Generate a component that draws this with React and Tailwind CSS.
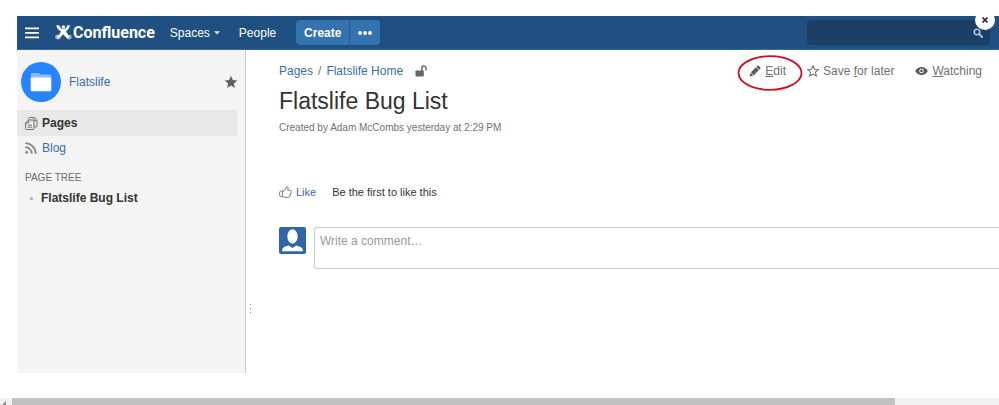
import React from 'react';

const Hamburger = () => (
    <svg width="14" height="12" viewBox="0 0 14 12" fill="#fff" aria-hidden="true">
        <path d="M0 .5h14v1.7H0zM0 5h14v1.7H0zM0 9.6h14v1.7H0z" />
    </svg>
);

const LogoMark = () => (
    <svg width="17" height="17" viewBox="0 0 17 17" fill="none" aria-hidden="true">
        <circle cx="8.4" cy="2.9" r="1.7" fill="#fff" />
        <path d="M1.200 1.200h3c.5 1.900 1.900 3.500 4.200 3.900 2.300-.4 3.500-2 4-3.900h2.600c-.5 2.700-1.900 4.700-4 6.100 1 2.300 2.300 3.900 4.200 5.400l-2.200 2C11 13.500 9.400 12 8.300 10.300 7 12 5.400 13.500 3.500 14.700l-2.200-2c2.200-1.400 3.700-3 4.700-5.200C3.500 6.100 1.800 4 1.200 1.200z" fill="#fff" />
        <path d="M3.500 11.500c-1.600-.5-2.900.5-2.700 1.800.3 1.500 2.700 2 4.200.8M13.300 11.500c1.600-.5 2.900.5 2.700 1.800-.3 1.500-2.700 2-4.200.8" stroke="#b5cbe2" strokeWidth="1.200" />
    </svg>
);

const SearchIcon = () => (
    <svg width="10" height="10" viewBox="0 0 10 10" fill="none" stroke="#a9c3e0" aria-hidden="true">
        <circle cx="4" cy="4" r="2.800" strokeWidth="1.600" />
        <path d="M6.200 6.200L9 9" strokeWidth="1.900" strokeLinecap="round" />
    </svg>
);

const FolderAvatar = () => (
    <svg className="shrink-0" width="40" height="40" viewBox="0 0 40 40" aria-hidden="true">
        <circle cx="20" cy="20" r="20" fill="#2684ff" />
        <path d="M10 12a1 1 0 0 1 1-1h7l1.500 1.500H29a1 1 0 0 1 1 1V18H10z" fill="#8abdff" />
        <path d="M9.700 15.500h20.600V28a1.200 1.200 0 0 1-1.200 1.200H10.900A1.200 1.200 0 0 1 9.700 28z" fill="#fff" />
    </svg>
);

const STAR = 'M7 .8l1.800 4.200 4.500.4-3.400 3 1 4.500L7 10.500l-3.900 2.400 1-4.500-3.400-3L5.200 5z';

const StarFilled = () => (
    <svg width="14" height="14" viewBox="0 0 14 14" fill="#5f5f5f" aria-hidden="true">
        <path d={STAR} />
    </svg>
);

const StarOutline = () => (
    <svg width="12" height="12" viewBox="0 0 14 14" fill="none" stroke="#707070" strokeWidth="1.200" aria-hidden="true">
        <path d={STAR} />
    </svg>
);

const PagesIcon = () => (
    <svg width="13" height="13" viewBox="0 0 13 13" fill="none" stroke="#707070" aria-hidden="true">
        <path d="M3.800 2.500v-1a1 1 0 0 1 1-1h4.400l2.800 2.700V9a1 1 0 0 1-1 1H9.300" />
        <path d="M8.800.8v2.700h2.900" strokeWidth=".8" />
        <path d="M3.600 3L.5 5.800v5.700a1 1 0 0 0 1 1H8a1 1 0 0 0 1-1V4a1 1 0 0 0-1-1zM3.700 3.200v2.700H.8" />
        <path d="M2.500 8.200H7M2.500 10.200H7" strokeWidth=".9" />
    </svg>
);

const RssIcon = () => (
    <svg width="12" height="12" viewBox="0 0 12 12" fill="none" stroke="#8a8a8a" aria-hidden="true">
        <circle cx="1.700" cy="10.300" r="1.500" fill="#8a8a8a" stroke="none" />
        <path d="M.3 5.200a6.500 6.500 0 0 1 6.500 6.500M.3 1.200a10.500 10.500 0 0 1 10.500 10.500" strokeWidth="1.800" />
    </svg>
);

const UnlockIcon = () => (
    <svg width="12" height="12" viewBox="0 0 12 12" fill="none" aria-hidden="true">
        <rect x=".5" y="5.500" width="8.300" height="6" rx=".8" fill="#666" />
        <path d="M6.800 6V3.200a2.100 2.100 0 0 1 4.200 0v2.300" stroke="#666" strokeWidth="1.500" />
    </svg>
);

const PencilIcon = () => (
    <svg width="12" height="12" viewBox="0 0 12 12" fill="#5c5c5c" aria-hidden="true">
        <path d="M.6 11.500l.9-3.700 2.800 2.800zM1.900 7.300L7 2.200l2.900 2.900-5.100 5.100zM7.400 1.800l1-1c.4-.4.9-.4 1.300 0l1.600 1.600c.4.4.4.9 0 1.300l-1 1z" />
    </svg>
);

const EyeIcon = () => (
    <svg width="13" height="10" viewBox="0 0 13 10" aria-hidden="true">
        <path d="M.2 5C1.800 2.300 4 .9 6.500.9S11.200 2.300 12.800 5C11.200 7.700 9 9.100 6.500 9.100S1.800 7.700.2 5z" fill="#555" />
        <circle cx="6.500" cy="4.900" r="2.300" fill="#fff" />
        <circle cx="6.500" cy="4.900" r="1.300" fill="#555" />
    </svg>
);

const ThumbIcon = () => (
    <svg width="13" height="12" viewBox="0 0 13 12" fill="none" stroke="#777" strokeLinejoin="round" aria-hidden="true">
        <path d="M4 5.300L6.300 3.600 7.400.9c.3-.6 1.800-.3 1.700.9L8.700 4.200h2.600c.8 0 1.200.6 1 1.300l-1.400 4.800c-.2.700-.6 1-1.300 1H5.500L4 10.500M4 5H2.200C1 5 .6 6 .6 7.800s.4 3 1.600 3H4c-.8-1-.9-4.700 0-5.800z" />
    </svg>
);

const UserAvatar = () => (
    <svg className="shrink-0" width="27" height="27" viewBox="0 0 27 27" aria-hidden="true">
        <rect width="27" height="27" rx="2" fill="#2f66a3" />
        <ellipse cx="13.500" cy="9.500" rx="5.200" ry="7.200" fill="#fff" />
        <path d="M3 24.300c0-3.300 1.800-4.700 6.700-5.800l3.800 2.500 3.800-2.500c4.900 1.100 6.700 2.500 6.700 5.800z" fill="#fff" />
    </svg>
);

function Header() {
    return (
        <header className="flex h-[34px] items-center border-b border-[#3a6796] bg-[#205081] pl-2 pr-[9px] text-xs text-white">
            <button type="button" aria-label="Menu"><Hamburger /></button>
            <a href="#home" className="ml-4 flex items-center gap-px font-['Roboto',sans-serif] text-base font-bold leading-5">
                <LogoMark />
                Confluence
            </a>
            <nav className="ml-[15px] flex items-center gap-[19px]">
                <button type="button" className="flex items-center gap-1">
                    Spaces
                    <svg width="6" height="4" viewBox="0 0 6 4" fill="#dbe5ef" aria-hidden="true"><path d="M0 .3h6L3 3.500z" /></svg>
                </button>
                <a href="#people">People</a>
            </nav>
            <div className="ml-5 flex h-[25px] overflow-hidden rounded-sm">
                <button type="button" className="w-[54px] border-r border-[#2a5d95] bg-[#3572b0] font-bold">Create</button>
                <button type="button" aria-label="More" className="flex w-[30px] items-center justify-center bg-[#3572b0]">
                    <svg width="14" height="4" viewBox="0 0 14 4" fill="#fff" aria-hidden="true">
                        <circle cx="2" cy="2" r="1.900" /><circle cx="7" cy="2" r="1.900" /><circle cx="12" cy="2" r="1.900" />
                    </svg>
                </button>
            </div>
            <form className="ml-auto flex h-[25px] w-[183px] items-center rounded-sm bg-[#1c3f65] pr-[7px]">
                <input type="search" aria-label="Search" className="min-w-0 flex-1 bg-transparent px-2 outline-none" />
                <button type="button" aria-label="Submit search"><SearchIcon /></button>
            </form>
        </header>
    );
}

function Sidebar() {
    return (
        <aside className="w-[229px] shrink-0 border-r border-[#ccc] bg-[#f4f4f4] pt-3">
            <div className="flex items-center pl-1 pr-[7px]">
                <FolderAvatar />
                <a href="#space" className="ml-2 text-[#3b6cab]">Flatslife</a>
                <button type="button" aria-label="Favourite space" className="ml-auto"><StarFilled /></button>
            </div>
            <nav className="mr-2 mt-2">
                <a href="#pages" className="flex h-[26px] items-center gap-1 bg-[#e8e8e8] pl-2 font-bold text-[#333]">
                    <PagesIcon /> Pages
                </a>
                <a href="#blog" className="flex h-6 items-center gap-[5px] pl-2 text-[#3b6cab]">
                    <RssIcon /> Blog
                </a>
            </nav>
            <h2 className="mt-2 pl-2 text-[10px] leading-5 text-[#6a6a6a]">PAGE TREE</h2>
            <ul>
                <li className="flex h-5 items-center gap-2 pl-[13px]">
                    <span className="size-[3px] rounded-full bg-[#aaa]" />
                    <a href="#bug-list" className="font-bold text-[#333]">Flatslife Bug List</a>
                </li>
            </ul>
        </aside>
    );
}

function PageActions() {
    return (
        <div className="flex items-center gap-[21px] text-[#707070]">
            <button type="button" className="relative flex items-center gap-1">
                <PencilIcon />
                <span><u>E</u>dit</span>
                {/* red marker drawn round the Edit button */}
                <svg className="pointer-events-none absolute -left-3 -top-2" width="66" height="36" viewBox="0 0 66 36" fill="none" aria-hidden="true">
                    <ellipse cx="33" cy="18" rx="31.500" ry="16.800" stroke="#c8151d" strokeWidth="1.800" />
                </svg>
            </button>
            <button type="button" className="flex items-center gap-1">
                <StarOutline />
                <span>Save <u>f</u>or later</span>
            </button>
            <button type="button" className="flex items-center gap-1">
                <EyeIcon />
                <span><u>W</u>atching</span>
            </button>
        </div>
    );
}

export default function App() {
    return (
        <div className="relative flex min-h-screen flex-col bg-white pt-4 font-['Liberation_Sans',Arial,sans-serif] text-xs text-[#333]">
            <div className="ml-[17px] flex flex-1 flex-col">
                <Header />
                <div className="flex flex-1">
                    <Sidebar />
                    <div className="flex w-2 shrink-0 flex-col items-center gap-[3px] self-end pb-[60px]">
                        <i className="size-px bg-[#888]" />
                        <i className="size-px bg-[#888]" />
                        <i className="size-px bg-[#888]" />
                    </div>
                    <main className="min-w-0 flex-1 pl-[25px] pt-3">
                        <div className="flex h-[18px] items-center justify-between pr-[17px]">
                            <nav aria-label="Breadcrumb" className="flex items-center gap-[5px] text-[#3b6cab]">
                                <a href="#pages">Pages</a>
                                <span className="text-[#707070]">/</span>
                                <a href="#home">Flatslife Home</a>
                                <button type="button" aria-label="Restrictions" className="ml-[7px]"><UnlockIcon /></button>
                            </nav>
                            <PageActions />
                        </div>
                        <h1 className="mt-1.5 text-[23px] leading-[30px]">Flatslife Bug List</h1>
                        <p className="mt-1 text-[10px] leading-4 text-[#707070]">Created by Adam McCombs yesterday at 2:29 PM</p>
                        <div className="mt-12 flex h-4 items-center text-[11px]">
                            <button type="button" className="flex items-center gap-1 text-[#3b6cab]">
                                <ThumbIcon /> Like
                            </button>
                            <span className="ml-4">Be the first to like this</span>
                        </div>
                        <div className="mt-[27px] flex items-start gap-2">
                            <UserAvatar />
                            <textarea
                                aria-label="Comment"
                                placeholder="Write a comment…"
                                className="h-[42px] min-w-0 flex-1 resize-none rounded-l-[3px] border border-r-0 border-[#ccc] px-[5px] py-[5px] outline-none placeholder:text-[#999]"
                            />
                        </div>
                    </main>
                </div>
            </div>

            {/* horizontal scrollbar */}
            <div className="mt-[25px] flex h-[7px] items-end overflow-hidden bg-[#f1f1f1]">
                <svg className="w-3 shrink-0" height="4" viewBox="0 0 12 4" fill="#888" aria-hidden="true"><path d="M2 4l4-4v4z" /></svg>
                <div className="h-full w-[88.4%] bg-[#c1c1c1]" />
            </div>

            <button type="button" aria-label="Close" className="absolute right-1 top-2.5 flex size-5 items-center justify-center rounded-full bg-white">
                <svg width="6" height="6" viewBox="0 0 6 6" stroke="#333" strokeWidth="1.700" aria-hidden="true"><path d="M.5.5l5 5M5.500.5l-5 5" /></svg>
            </button>
        </div>
    );
}
